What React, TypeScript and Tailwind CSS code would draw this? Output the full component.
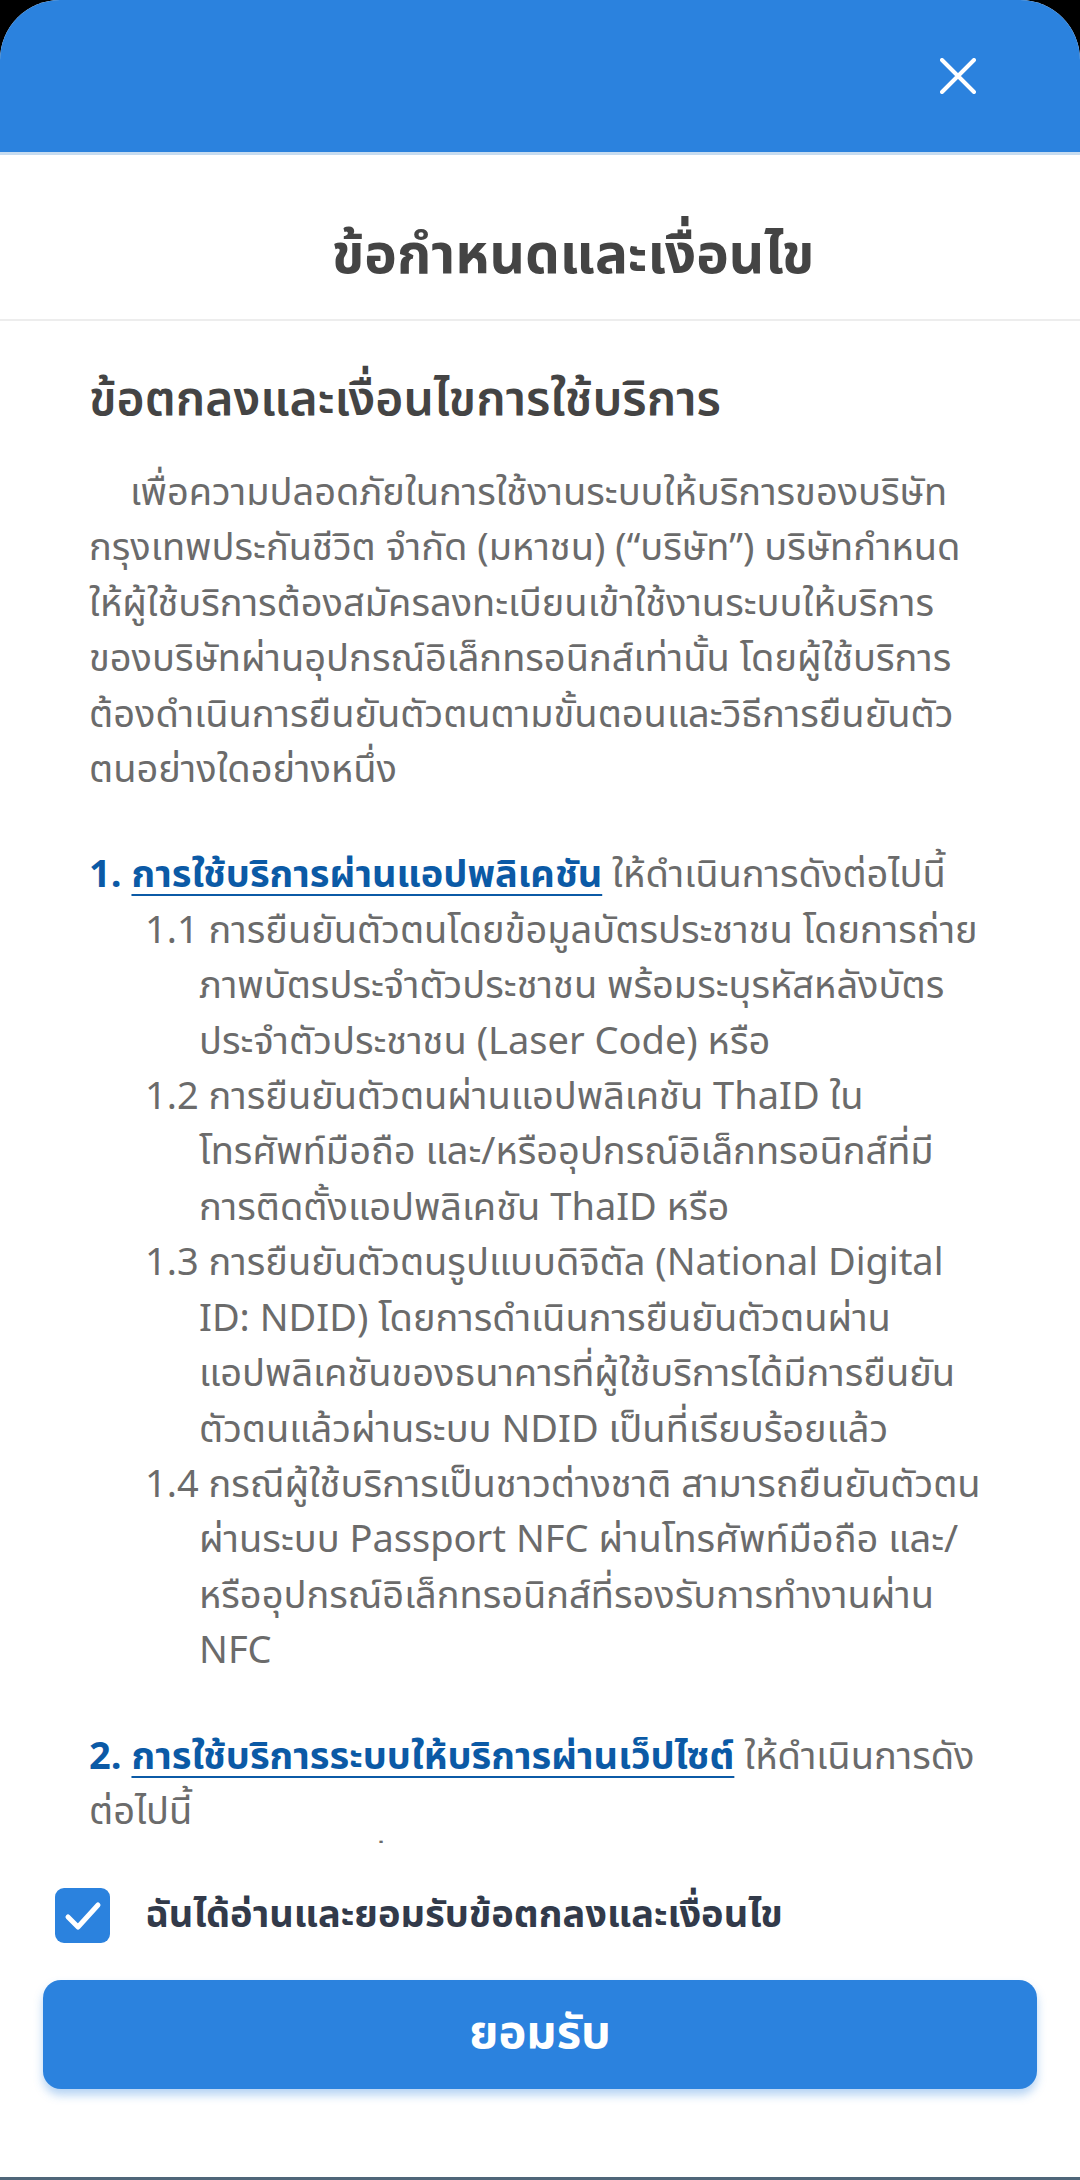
import React, { useState } from 'react';

const thaiFont = { fontFamily: '"Noto Sans Thai", "Noto Sans Thai UI", "Noto Sans", sans-serif' };

interface SubItem {
  no: string;
  lines: string[];
}

const intro = [
  'กรุงเทพประกันชีวิต จำกัด (มหาชน) (“บริษัท”) บริษัทกำหนด',
  'ให้ผู้ใช้บริการต้องสมัครลงทะเบียนเข้าใช้งานระบบให้บริการ',
  'ของบริษัทผ่านอุปกรณ์อิเล็กทรอนิกส์เท่านั้น โดยผู้ใช้บริการ',
  'ต้องดำเนินการยืนยันตัวตนตามขั้นตอนและวิธีการยืนยันตัว',
  'ตนอย่างใดอย่างหนึ่ง',
];

const section1: SubItem[] = [
  {
    no: '1.1',
    lines: [
      'การยืนยันตัวตนโดยข้อมูลบัตรประชาชน โดยการถ่าย',
      'ภาพบัตรประจำตัวประชาชน พร้อมระบุรหัสหลังบัตร',
      'ประจำตัวประชาชน (Laser Code) หรือ',
    ],
  },
  {
    no: '1.2',
    lines: [
      'การยืนยันตัวตนผ่านแอปพลิเคชัน ThaID ใน',
      'โทรศัพท์มือถือ และ/หรืออุปกรณ์อิเล็กทรอนิกส์ที่มี',
      'การติดตั้งแอปพลิเคชัน ThaID หรือ',
    ],
  },
  {
    no: '1.3',
    lines: [
      'การยืนยันตัวตนรูปแบบดิจิตัล (National Digital',
      'ID: NDID) โดยการดำเนินการยืนยันตัวตนผ่าน',
      'แอปพลิเคชันของธนาคารที่ผู้ใช้บริการได้มีการยืนยัน',
      'ตัวตนแล้วผ่านระบบ NDID เป็นที่เรียบร้อยแล้ว',
    ],
  },
  {
    no: '1.4',
    lines: [
      'กรณีผู้ใช้บริการเป็นชาวต่างชาติ สามารถยืนยันตัวตน',
      'ผ่านระบบ Passport NFC ผ่านโทรศัพท์มือถือ และ/',
      'หรืออุปกรณ์อิเล็กทรอนิกส์ที่รองรับการทำงานผ่าน',
      'NFC',
    ],
  },
];

const section2: SubItem[] = [
  {
    no: '2.1',
    lines: [
      'ผู้ใช้บริการที่ลงทะเบียนแล้ว สามารถเข้าใช้งานได้ทันที',
      'โดยใช้ชื่อผู้ใช้งานและรหัสผ่านที่ได้ตั้งไว้',
    ],
  },
];

const SubList: React.FC<{ items: SubItem[] }> = ({ items }) => (
  <div>
    {items.map(item => (
      <div key={item.no}>
        {item.lines.map((line, i) => (
          <p key={i} className={`whitespace-nowrap ${i === 0 ? 'ml-[56px]' : 'ml-[110px]'}`}>
            {i === 0 ? `${item.no} ${line}` : line}
          </p>
        ))}
      </div>
    ))}
  </div>
);

const App: React.FC = () => {
  const [accepted, setAccepted] = useState(true);

  return (
    <div className="h-[2180px] w-[1080px] bg-black flex flex-col" style={thaiFont}>
      <div className="flex-1 flex flex-col bg-white rounded-t-[60px] overflow-hidden border-b-[3px] border-[#4f6679]">
        {/* Header */}
        <div className="h-[152px] shrink-0 bg-[#2b82de] flex items-center justify-end pr-[104px]">
          <button className="w-[36px] h-[36px] flex items-center justify-center">
            <svg width="36" height="36" viewBox="0 0 36 36" fill="none">
              <path d="M2 2L34 34M34 2L2 34" stroke="white" strokeWidth="4" strokeLinecap="round" />
            </svg>
          </button>
        </div>
        <div className="h-[3px] shrink-0 bg-[#c7dcf0]" />

        {/* Title */}
        <div className="h-[166px] shrink-0 flex items-center justify-center pt-[40px] pl-[66px] border-b-2 border-[#ededed]">
          <h1 className="text-[55px] leading-[70px] font-bold text-[#444444]">ข้อกำหนดและเงื่อนไข</h1>
        </div>

        {/* Scrollable terms */}
        <div className="flex-1 overflow-hidden px-[89px] pt-[52px] text-[38px] leading-[55.4px] text-[#6b6b6b]">
          <h2 className="text-[48px] font-semibold text-[#444444] leading-[55px] mb-[38px] whitespace-nowrap">
            ข้อตกลงและเงื่อนไขการใช้บริการ
          </h2>
          <p className="whitespace-nowrap pl-[41px]">เพื่อความปลอดภัยในการใช้งานระบบให้บริการของบริษัท</p>
          {intro.map((line, i) => (
            <p key={i} className="whitespace-nowrap">
              {line}
            </p>
          ))}

          <p className="mt-[50px] whitespace-nowrap">
            <span className="font-bold text-[#0b5aa6]">
              1.{' '}
              <a className="underline decoration-2 underline-offset-[7px]">การใช้บริการผ่านแอปพลิเคชัน</a>
            </span>{' '}
            ให้ดำเนินการดังต่อไปนี้
          </p>
          <SubList items={section1} />

          <p className="mt-[50px] whitespace-nowrap">
            <span className="font-bold text-[#0b5aa6]">
              2.{' '}
              <a className="underline decoration-2 underline-offset-[7px]">การใช้บริการระบบให้บริการผ่านเว็ปไซต์</a>
            </span>{' '}
            ให้ดำเนินการดัง
          </p>
          <p>ต่อไปนี้</p>
          <SubList items={section2} />
        </div>

        {/* Footer */}
        <div className="shrink-0 h-[334px] px-[43px] pt-[44px] bg-white">
          <label className="flex items-center gap-[35px] pl-[12px] cursor-pointer">
            <span
              onClick={() => setAccepted(!accepted)}
              className={`w-[55px] h-[55px] rounded-[9px] flex items-center justify-center ${
                accepted ? 'bg-[#2b82de]' : 'bg-white border-2 border-[#9aa5b1]'
              }`}
            >
              {accepted && (
                <svg width="40" height="40" viewBox="0 0 40 40" fill="none">
                  <path d="M5 21L15 31L35 9" stroke="white" strokeWidth="5" strokeLinecap="round" strokeLinejoin="round" />
                </svg>
              )}
            </span>
            <span className="text-[38px] font-bold text-[#323a4a] whitespace-nowrap">
              ฉันได้อ่านและยอมรับข้อตกลงและเงื่อนไข
            </span>
          </label>

          <button className="mt-[36px] w-full h-[109px] rounded-[18px] bg-[#2b82de] text-white text-[47px] font-bold shadow-[0_6px_10px_rgba(43,130,222,0.35)]">
            ยอมรับ
          </button>
        </div>
      </div>
    </div>
  );
};

export default App;
